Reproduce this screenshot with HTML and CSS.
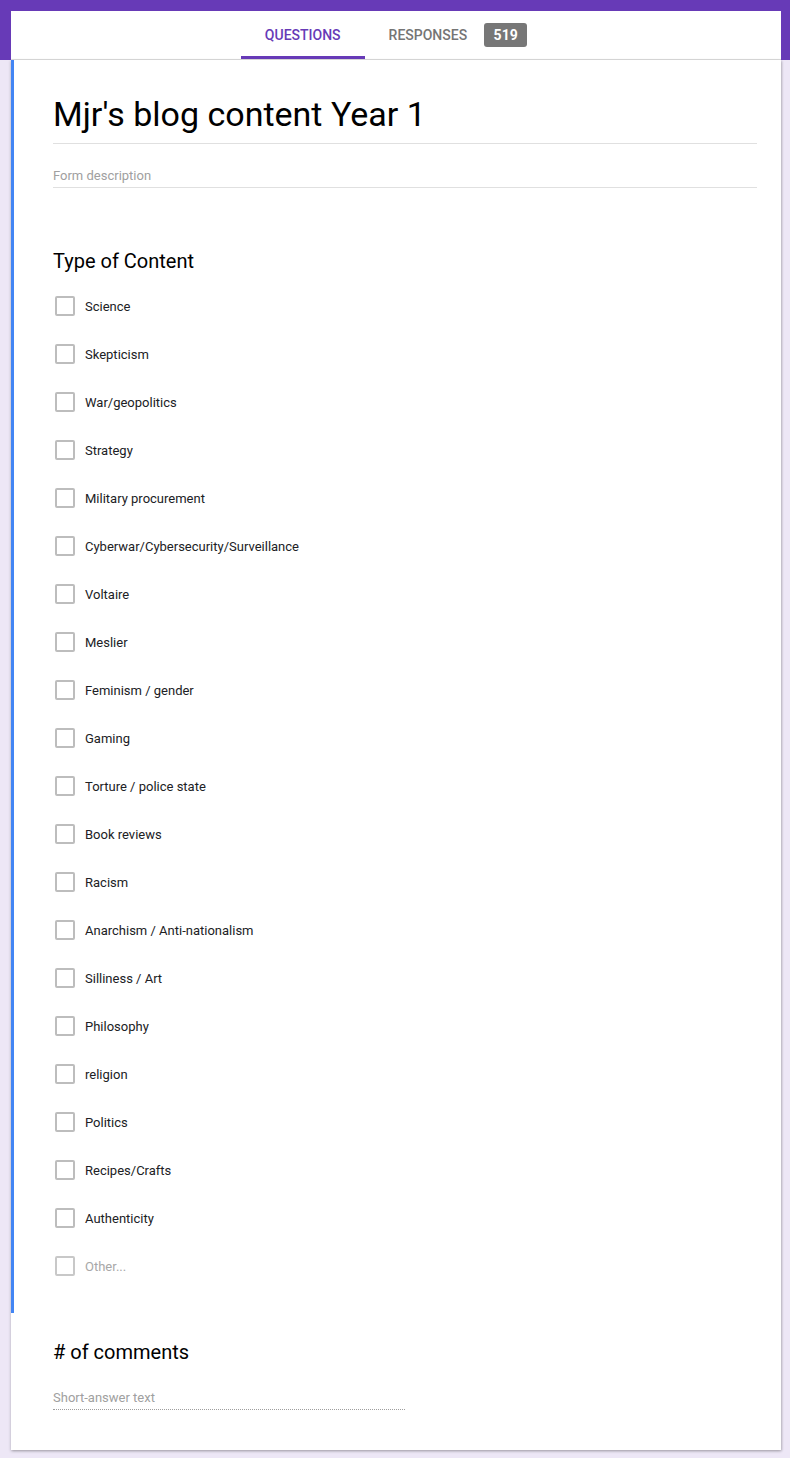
FILE: index.html
```html
<!DOCTYPE html>
<html lang="en">
<head>
<meta charset="utf-8">
<title>Mjr's blog content Year 1</title>
<link rel="stylesheet" href="styles.css">
</head>
<body>
<header class="header">
  <nav class="tabs">
    <div class="tab tab-active">QUESTIONS</div>
    <div class="tab">RESPONSES <span class="badge">519</span></div>
  </nav>
</header>
<main class="card">
  <section class="section section-focused">
    <div class="title-wrap"><h1 class="title">Mjr's blog content Year 1</h1></div>
    <div class="desc">Form description</div>
    <h2 class="question">Type of Content</h2>
    <ul class="options">
      <li class="option"><span class="box"></span><span class="label">Science</span></li>
      <li class="option"><span class="box"></span><span class="label">Skepticism</span></li>
      <li class="option"><span class="box"></span><span class="label">War/geopolitics</span></li>
      <li class="option"><span class="box"></span><span class="label">Strategy</span></li>
      <li class="option"><span class="box"></span><span class="label">Military procurement</span></li>
      <li class="option"><span class="box"></span><span class="label">Cyberwar/Cybersecurity/Surveillance</span></li>
      <li class="option"><span class="box"></span><span class="label">Voltaire</span></li>
      <li class="option"><span class="box"></span><span class="label">Meslier</span></li>
      <li class="option"><span class="box"></span><span class="label">Feminism / gender</span></li>
      <li class="option"><span class="box"></span><span class="label">Gaming</span></li>
      <li class="option"><span class="box"></span><span class="label">Torture / police state</span></li>
      <li class="option"><span class="box"></span><span class="label">Book reviews</span></li>
      <li class="option"><span class="box"></span><span class="label">Racism</span></li>
      <li class="option"><span class="box"></span><span class="label">Anarchism / Anti-nationalism</span></li>
      <li class="option"><span class="box"></span><span class="label">Silliness / Art</span></li>
      <li class="option"><span class="box"></span><span class="label">Philosophy</span></li>
      <li class="option"><span class="box"></span><span class="label">religion</span></li>
      <li class="option"><span class="box"></span><span class="label">Politics</span></li>
      <li class="option"><span class="box"></span><span class="label">Recipes/Crafts</span></li>
      <li class="option"><span class="box"></span><span class="label">Authenticity</span></li>
      <li class="option option-other"><span class="box"></span><span class="label">Other...</span></li>
    </ul>
  </section>
  <section class="section section-plain">
    <h2 class="question question-2"># of comments</h2>
    <div class="short">Short-answer text</div>
  </section>
</main>
</body>
</html>
```
FILE: styles.css
```css
* { box-sizing: border-box; }
body {
  margin: 0;
  background: #ede7f6;
  font-family: Roboto, "Liberation Sans", Arial, sans-serif;
  color: #202124;
}
.header {
  background: #673ab7;
  padding: 11px 9px 0 11px;
}
.tabs {
  background: #fff;
  height: 49px;
  border-bottom: 1px solid #e0e0e0;
  display: flex;
  justify-content: center;
}
.tab {
  display: flex;
  align-items: center;
  padding: 3px 24px 0;
  font-size: 14px;
  font-weight: 500;
  color: #757575;
  border-bottom: 3px solid transparent;
}
.tab-active {
  color: #673ab7;
  border-bottom-color: #673ab7;
}
.badge {
  margin-left: 17px;
  background: #777;
  color: #fff;
  font-weight: 700;
  border-radius: 3px;
  width: 43px;
  height: 24px;
  display: flex;
  align-items: center;
  justify-content: center;
}
.card {
  margin: 0 9px 8px 11px;
  background: #fff;
  box-shadow: 0 1px 3px rgba(0,0,0,0.25), 1px 1px 2px rgba(0,0,0,0.12);
}
.section-focused {
  border-left: 3px solid #4285f4;
  padding: 34px 24px 23px 39px;
}
.section-plain {
  padding: 27px 24px 40px 42px;
}
.title-wrap {
  padding-bottom: 9px;
  border-bottom: 1px solid #e0e0e0;
}
.title {
  margin: 0;
  font-size: 34px;
  line-height: 40px;
  font-weight: 400;
  color: #000;
}
.desc {
  margin-top: 22px;
  font-size: 13px;
  line-height: 20px;
  color: #a0a0a0;
  padding-bottom: 1px;
  border-bottom: 1px solid #e0e0e0;
}
.question {
  margin: 61px 0 9px;
  font-size: 20px;
  line-height: 24px;
  font-weight: 400;
  color: #000;
}
.options {
  list-style: none;
  margin: 0;
  padding: 0;
}
.option {
  height: 48px;
  display: flex;
  align-items: center;
}
.box {
  width: 20px;
  height: 20px;
  margin-left: 2px;
  border: 2px solid #bdbdbd;
  border-radius: 2px;
  flex: none;
}
.label {
  margin-left: 10px;
  font-size: 13px;
  color: #202124;
}
.option-other .label { color: #a8a8a8; }
.option-other .box { border-color: #c8c8c8; }
.question-2 {
  margin: 0;
}
.short {
  margin-top: 24px;
  width: 50%;
  font-size: 13px;
  line-height: 20px;
  color: #a0a0a0;
  padding-bottom: 1px;
  border-bottom: 1px dotted #9e9e9e;
}
```
